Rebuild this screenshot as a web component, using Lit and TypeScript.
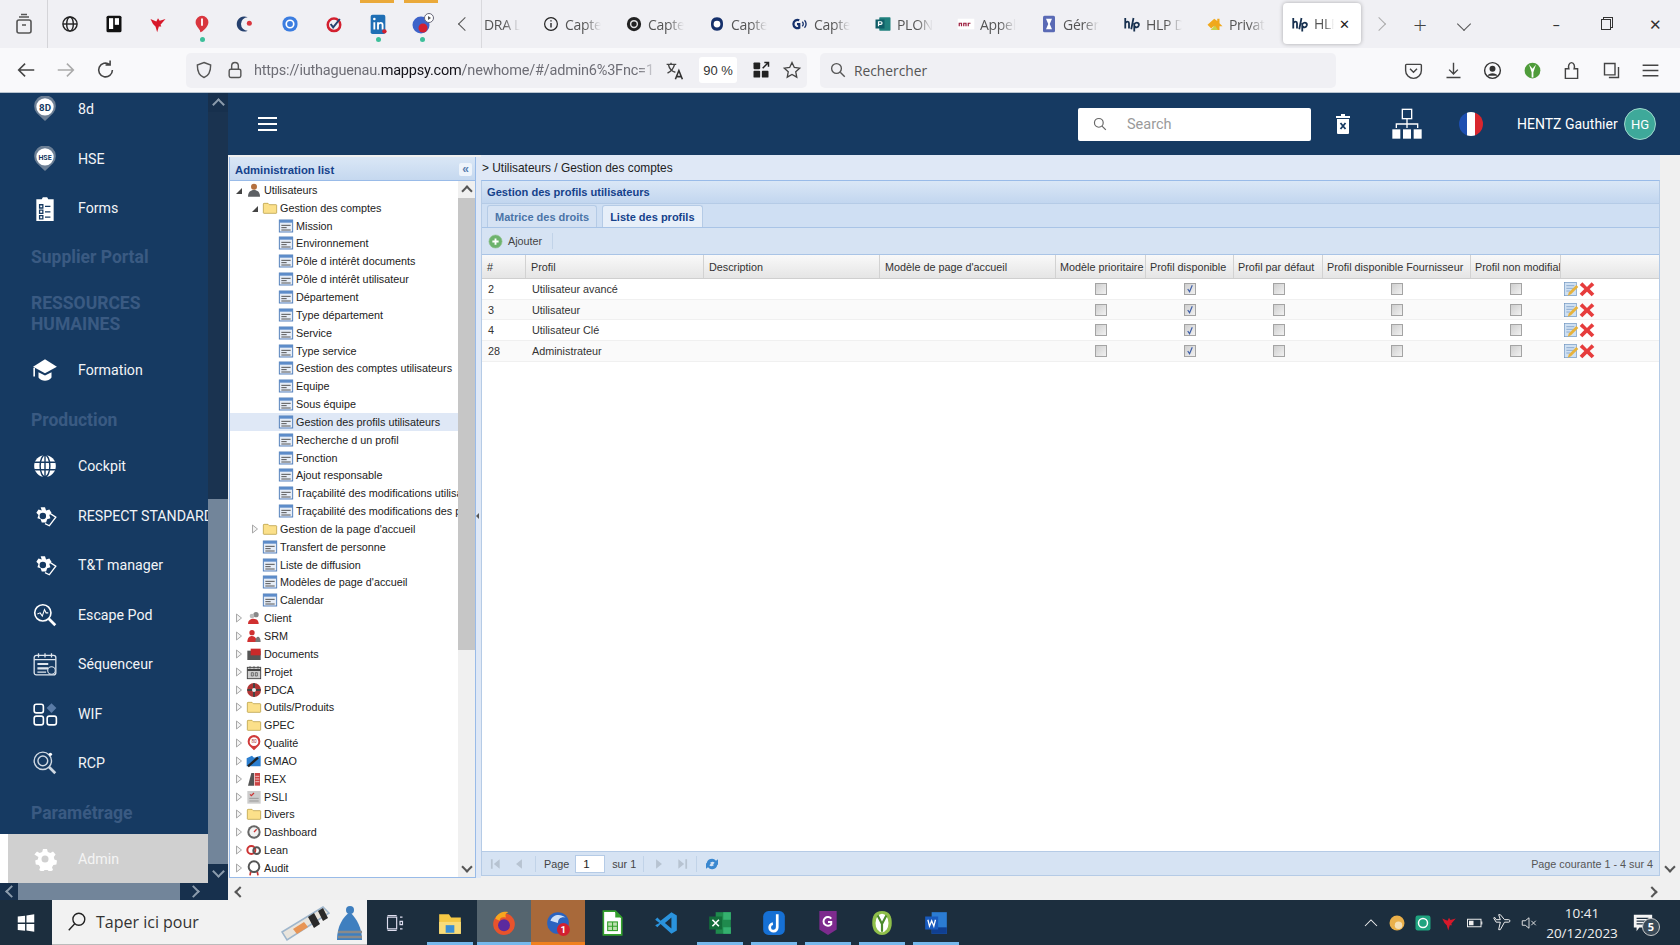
import { LitElement, css, html, svg } from "lit";
import { customElement } from "lit/decorators.js";

const ICONS: Record<string, any> = {
  view: svg`<rect x="5" y="8" width="14" height="13" rx="2" fill="none" stroke="#555" stroke-width="1.6"/><path d="M7 5h10M9 2.5h6M10 13h4" stroke="#555" stroke-width="1.6"/>`,
  globe: svg`<g fill="none" stroke="#222" stroke-width="1.7"><circle cx="12" cy="12" r="8.5"/><ellipse cx="12" cy="12" rx="4" ry="8.5"/><path d="M3.5 12h17"/></g>`,
  trello: svg`<rect x="3" y="2" width="18" height="20" rx="2" fill="#111"/><rect x="6" y="5" width="5" height="13" fill="#fff"/><rect x="13" y="5" width="5" height="8" fill="#fff"/>`,
  bird: svg`<path d="M3 6l7 3 2-4 2 3 7-2-6 7 1 2-3 0-2 7-2-7-3-3z" fill="#d7182a"/>`,
  pin1: svg`<path d="M12 3a7 7 0 0 1 7 7c0 5-7 11-9 11 1-3-5-6-5-11a7 7 0 0 1 7-7z" fill="#d9363e"/><path d="M12 6v8" stroke="#fff" stroke-width="2"/>`,
  moon: svg`<path d="M14 4a9 9 0 1 0 0 16 7 7 0 0 1 0-16z" fill="#25406e"/><circle cx="16" cy="11" r="3" fill="#d9363e"/>`,
  aqua: svg`<rect x="3" y="3" width="18" height="18" rx="8" fill="#3b7de0"/><circle cx="12" cy="12" r="4.5" fill="none" stroke="#fff" stroke-width="2"/>`,
  target: svg`<circle cx="12" cy="13" r="7.5" fill="none" stroke="#d3202f" stroke-width="3"/><path d="M8 12l3 4 8-10" fill="none" stroke="#25406e" stroke-width="2.4"/>`,
  linkedin: svg`<rect x="4" y="2" width="16" height="21" rx="2" fill="#1f6fb5"/><path d="M8 10v8M12 18v-8M12 13c1-3 5-3 5 0v5" stroke="#fff" stroke-width="2" fill="none"/><circle cx="8" cy="6.5" r="1.4" fill="#fff"/><circle cx="19" cy="20" r="2.4" fill="#d3202f"/>`,
  chrome: svg`<circle cx="11" cy="13" r="8.5" fill="#3d63c9"/><circle cx="13" cy="16" r="4.5" fill="#d3202f"/><circle cx="19" cy="6" r="4.5" fill="#fff" stroke="#667" stroke-width="1"/><path d="M18 4l3 2-3 2z" fill="#555"/>`,
  info: svg`<circle cx="12" cy="12" r="8.5" fill="none" stroke="#222" stroke-width="1.6"/><path d="M12 10.5v6M12 7v1.6" stroke="#222" stroke-width="1.8"/>`,
  swirl: svg`<circle cx="12" cy="12" r="9.5" fill="#222"/><circle cx="12" cy="12" r="4.5" fill="none" stroke="#ddd" stroke-width="2"/>`,
  q: svg`<path d="M12 3c6 0 8 4 8 9s-2 9-8 9-8-4-8-9 2-9 8-9z" fill="#15306b"/><circle cx="12" cy="12" r="4.5" fill="#fff"/>`,
  go: svg`<path d="M11 7a5.5 5.5 0 1 0 0 10v-5H8" fill="none" stroke="#15306b" stroke-width="3"/><path d="M15 9a4 4 0 0 1 0 6M18 7a7 7 0 0 1 0 10" fill="none" stroke="#15306b" stroke-width="1.8"/>`,
  planner: svg`<rect x="7" y="3" width="15" height="18" rx="1" fill="#20807d"/><rect x="2" y="6" width="12" height="12" fill="#0f5d66"/><path d="M6 15V9h3a1.6 1.6 0 0 1 0 3.4H6" fill="none" stroke="#fff" stroke-width="1.6"/>`,
  anr: svg`<rect x="1" y="5" width="22" height="14" fill="#fff"/><path d="M3 15v-4h3v4M9 15v-4h3v4M15 15v-4h3" fill="none" stroke="#9b1c3d" stroke-width="1.6"/>`,
  hourglass: svg`<rect x="4" y="1" width="16" height="22" rx="2" fill="#5a6ab5"/><path d="M8 5h8l-3 7 3 7H8l3-7z" fill="#fff"/>`,
  hlp: svg`<path d="M3 4v14M3 11c2-3 5-3 5 0v7M11 19l3-15M15 11v11M15 12c3-3 7-2 6 2-1 3-4 3-6 1" fill="none" stroke="#17304f" stroke-width="2.4"/>`,
  house: svg`<path d="M2 13L11 5l4 3V5h3v6l4 4h-4v5h-6l-2-5-3 3z" fill="#f0a81c"/><path d="M6 20l6-6 4 6z" fill="#c9d24a"/>`,
  back: svg`<path d="M21 12H4M11 5l-7 7 7 7" fill="none" stroke="#444" stroke-width="1.7"/>`,
  fwd: svg`<path d="M3 12h17M13 5l7 7-7 7" fill="none" stroke="#aaa" stroke-width="1.7"/>`,
  reload: svg`<path d="M19 12a7.5 7.5 0 1 1-3-6M16.5 1.5V6.5H11.5" fill="none" stroke="#444" stroke-width="1.7"/>`,
  shield: svg`<path d="M12 3l8 3c0 8-2 13-8 15-6-2-8-7-8-15z" fill="none" stroke="#555" stroke-width="1.7"/>`,
  lock: svg`<rect x="5" y="11" width="14" height="10" rx="2" fill="none" stroke="#555" stroke-width="1.7"/><path d="M8 11V7a4 4 0 0 1 8 0v4" fill="none" stroke="#555" stroke-width="1.7"/>`,
  translate: svg`<path d="M3 5h11M8 3v2M5 5c1 5 4 8 8 9M12 5c-1 5-4 8-8 10" fill="none" stroke="#444" stroke-width="1.6"/><path d="M13 22l4-10 4 10M15 19h5" fill="none" stroke="#333" stroke-width="1.8"/>`,
  ext: svg`<rect x="3" y="3" width="8" height="8" rx="1" fill="#222"/><rect x="3" y="13" width="8" height="8" rx="1" fill="#222"/><rect x="13" y="13" width="8" height="8" rx="1" fill="#222"/><path d="M14 10l6-6M16 3h5v5" fill="none" stroke="#222" stroke-width="1.8"/>`,
  star: svg`<path d="M12 3l2.8 6 6.4.8-4.7 4.4 1.2 6.4L12 17.4 6.300 20.600l1.200-6.400L2.800 9.800 9.200 9z" fill="none" stroke="#444" stroke-width="1.6"/>`,
  search: svg`<circle cx="10" cy="10" r="6.500" fill="none" stroke="#555" stroke-width="1.800"/><path d="M15 15l6 6" stroke="#555" stroke-width="1.800"/>`,
  pocket: svg`<path d="M4 5h16a1 1 0 0 1 1 1v6a9 9 0 0 1-18 0V6a1 1 0 0 1 1-1z" fill="none" stroke="#444" stroke-width="1.6"/><path d="M8 10l4 4 4-4" fill="none" stroke="#444" stroke-width="1.6"/>`,
  download: svg`<path d="M12 3v13M7 11l5 5 5-5M4 20h16" fill="none" stroke="#444" stroke-width="1.6"/>`,
  account: svg`<circle cx="12" cy="12" r="9" fill="none" stroke="#333" stroke-width="1.6"/><circle cx="12" cy="10" r="3.400" fill="#333"/><path d="M6 18c2-4 10-4 12 0" fill="#333"/>`,
  yshield: svg`<circle cx="12" cy="12" r="9" fill="#4f9c3a"/><path d="M8 5l3 9v6h2v-6l3-9-4 5z" fill="#fff"/>`,
  puzzle: svg`<path d="M5 21V10h4c-1-3 0-7 3-7s4 4 3 7h4v11z" fill="none" stroke="#444" stroke-width="1.6"/>`,
  synced: svg`<path d="M4 4h12v13H4zM9 20h11V8" fill="none" stroke="#444" stroke-width="1.6"/>`,
  burger: svg`<path d="M3 6h18M3 12h18M3 18h18" stroke="#444" stroke-width="1.6"/>`,
  trash: svg`<path d="M6 7h12v14a1 1 0 0 1-1 1H7a1 1 0 0 1-1-1zM5 4h14v2H5zM10 2h4v2h-4z" fill="#fff"/><path d="M9.500 11l5 6M14.500 11l-5 6" stroke="#163a62" stroke-width="1.800"/>`,
  org: svg`<rect x="8.500" y="1" width="7" height="7" fill="none" stroke="#fff" stroke-width="1"/><path d="M12 8v4M4 15v-3h16v3M12 12v3" fill="none" stroke="#fff" stroke-width="1"/><rect x="1" y="16" width="6" height="7" fill="#fff"/><rect x="9" y="16" width="6" height="7" fill="#fff"/><rect x="17" y="16" width="6" height="7" fill="#fff"/>`,
  pin8: svg`<path d="M12 23L4.500 16A10 10 0 1 1 19.500 16z" fill="#6c7f95"/><circle cx="12" cy="10" r="8" fill="#fff"/><text x="12" y="13.500" font-size="9" font-weight="700" text-anchor="middle" fill="#163a62" font-family="Roboto">8D</text>`,
  pinh: svg`<path d="M12 23L4.500 16A10 10 0 1 1 19.500 16z" fill="#6c7f95"/><circle cx="12" cy="10" r="8" fill="#fff"/><text x="12" y="12.500" font-size="6.500" font-weight="700" text-anchor="middle" fill="#163a62" font-family="Roboto">HSE</text>`,
  forms: svg`<path d="M4 4h5l1-2h4l1 2h5v20H4z" fill="#fff"/><path d="M7 9h3v3H7zM7 14h3v3H7zM7 19h3v3H7zM12 10.500h5M12 15.500h5M12 20.500h5" fill="none" stroke="#163a62" stroke-width="1.200"/>`,
  grad: svg`<path d="M12 2L1 9l11 6 11-6z" fill="#fff"/><path d="M6 14v5c3 4 9 4 12 0v-5l-6 3z" fill="#fff"/><path d="M2 10v8" stroke="#fff" stroke-width="1.500"/>`,
  globew: svg`<circle cx="12" cy="12" r="10" fill="#fff"/><g fill="none" stroke="#163a62" stroke-width="1.300"><ellipse cx="12" cy="12" rx="4.500" ry="10"/><path d="M2 8.500h20M2 15.500h20M12 2v20"/></g>`,
  gearw: svg`<path d="M10 2h4l1 3 3-1 2 3-2 2 1 3-3 1-1 3h-4l-1-3-3-1 1-3-2-2 2-3 3 1z" fill="#fff" transform="translate(-2 2)"/><circle cx="10" cy="12" r="3" fill="#163a62"/><path d="M14 8l8 5-6 8-4-2" fill="none" stroke="#fff" stroke-width="1.200"/>`,
  lens: svg`<circle cx="10" cy="10" r="7.500" fill="none" stroke="#fff" stroke-width="1.500"/><path d="M15.500 15.500l6 6" stroke="#fff" stroke-width="2.500"/><path d="M5 11l2.500-1 2 3 2-6 1.500 3h2" fill="none" stroke="#fff" stroke-width="1"/>`,
  lens2: svg`<circle cx="10" cy="10" r="8" fill="none" stroke="#cfd8e2" stroke-width="1.300"/><circle cx="10" cy="10" r="4.500" fill="none" stroke="#cfd8e2" stroke-width="1.300"/><path d="M15.500 15.500l6 6" stroke="#cfd8e2" stroke-width="2.500"/><circle cx="17" cy="4" r="1.500" fill="#fff"/>`,
  cal: svg`<rect x="2" y="4" width="20" height="18" rx="2" fill="none" stroke="#dfe6ee" stroke-width="1.200"/><path d="M2 8h20M6 2v4M12 2v4M18 2v4" stroke="#dfe6ee" stroke-width="1.200"/><path d="M5 11h10v2H5zM5 15h10v2H5zM5 19h8v1H5z" fill="#dfe6ee"/><circle cx="18" cy="18" r="3.500" fill="#163a62" stroke="#dfe6ee"/>`,
  wif: svg`<g fill="none" stroke="#fff" stroke-width="1.500"><rect x="2" y="3" width="8.500" height="8" rx="2"/><rect x="2" y="14" width="8.500" height="8" rx="2"/><rect x="14" y="14" width="8.500" height="8" rx="2"/></g><path d="M18 2l4.500 4.500L18 11l-4.500-4.500z" fill="#5a7ba6"/>`,
  gear: svg`<path d="M10 2h4l.8 3 2.600 1 2.600-1.500 2.600 3-1.800 2.500.6 2.600 2.600 1-.6 3.900-3 .4-1.400 2.400 1 2.800-3.400 2-2-2.200h-3l-2 2.200-3.400-2 1-2.800-1.400-2.400-3-.4-.6-3.900 2.600-1 .6-2.600L1.400 7.500 4 4.500 6.600 6l2.600-1z" fill="#fff"/><circle cx="12" cy="12" r="3.500" fill="#d0d0d0"/>`,
  person: svg`<circle cx="12" cy="7" r="4.500" fill="#b5713f"/><path d="M3 22c0-7 4-10 9-10s9 3 9 10z" fill="#5c5f63"/>`,
  folder: svg`<path d="M2 6a1 1 0 0 1 1-1h6l2 2h10a1 1 0 0 1 1 1v11a1 1 0 0 1-1 1H3a1 1 0 0 1-1-1z" fill="#fbe08a" stroke="#b59a3c" stroke-width="1.100"/>`,
  form: svg`<rect x="2" y="3" width="20" height="18" fill="#e6edf7" stroke="#4d7bb8" stroke-width="1.400"/><rect x="2" y="3" width="20" height="4" fill="#5d8cc9"/><path d="M5 11h14M5 14.500h8M5 18h14" stroke="#555" stroke-width="1.500"/>`,
  client: svg`<circle cx="15" cy="7" r="4" fill="#888"/><path d="M3 21c0-6 4-8 8-8s8 2 8 8z" fill="#d03030"/><circle cx="9" cy="9" r="3.500" fill="#bbb"/>`,
  srm: svg`<circle cx="9" cy="7" r="4" fill="#d03030"/><path d="M2 21c0-6 3-9 7-9s7 3 7 9z" fill="#d03030"/><path d="M14 21c0-5 2-8 4-8s4 3 4 8z" fill="#777"/>`,
  docs: svg`<path d="M2 7h20v14H2z" fill="#555"/><path d="M7 4h15v10H7z" fill="#c92a2a"/>`,
  projet: svg`<rect x="2" y="5" width="20" height="17" fill="#ccc" stroke="#444" stroke-width="1.400"/><path d="M2 9h20" stroke="#444" stroke-width="3"/><path d="M6 3v4M12 3v4M18 3v4M8 13h3v5H8zM14 13h3v5h-3z" stroke="#444" fill="none"/>`,
  pdca: svg`<circle cx="12" cy="12" r="10.500" fill="#b03535"/><path d="M12 2v20M2 12h20" stroke="#444" stroke-width="3"/><circle cx="12" cy="12" r="3" fill="#eee"/>`,
  qual: svg`<path d="M12 23L5 16A9.500 9.500 0 1 1 19 16z" fill="#d03a3a"/><circle cx="12" cy="10" r="6.500" fill="#fff"/><text x="12" y="12.500" font-size="7" text-anchor="middle" fill="#b03535" font-family="Roboto">80</text>`,
  gmao: svg`<path d="M1 8l8-4 3 3 10-3v16H1z" fill="#2c7fd0"/><path d="M3 20L18 7" stroke="#222" stroke-width="3.500"/>`,
  rex: svg`<path d="M3 22L8 3h4v19z" fill="#555"/><path d="M13 3h8v19h-8z" fill="#c44"/><path d="M14 8h6M14 12h6M14 16h6" stroke="#fff"/>`,
  psli: svg`<rect x="2" y="3" width="20" height="19" fill="#ccc"/><path d="M6 8l2 2 4-4" fill="none" stroke="#c33" stroke-width="1.800"/><path d="M5 14h14M5 18h14" stroke="#999" stroke-width="1.500"/>`,
  dash: svg`<circle cx="12" cy="12" r="10" fill="#666"/><circle cx="12" cy="12" r="7" fill="#f2f2f2"/><path d="M12 12l4-4" stroke="#c33" stroke-width="2"/>`,
  lean: svg`<circle cx="8" cy="12" r="6" fill="none" stroke="#c33" stroke-width="3"/><circle cx="16" cy="13" r="5" fill="none" stroke="#555" stroke-width="3"/>`,
  audit: svg`<circle cx="12" cy="10" r="8" fill="none" stroke="#555" stroke-width="3"/><path d="M7 18l-1 5M17 18l1 5" stroke="#c33" stroke-width="2.500"/>`,
  edit: svg`<rect x="2" y="2" width="18" height="20" fill="#cfe0f2" stroke="#6d93bf"/><path d="M5 7h12M5 11h12M5 15h6" stroke="#6d93bf"/><path d="M7 22l2-5L20 6l3 3-11 11z" fill="#e7b23c"/>`,
  del: svg`<path d="M5 2l7 7 7-7 4 4-7 6 7 7-4 4-7-7-7 7-4-4 7-7-7-6z" fill="#e63c3c"/>`,
  add: svg`<circle cx="12" cy="12" r="10.500" fill="#6db36d" stroke="#97c497"/><path d="M12 7v10M7 12h10" stroke="#fff" stroke-width="3"/>`,
  first: svg`<path d="M5 4h3v16H5zM20 4v16L10 12z" fill="#b7c3d1"/>`,
  prev: svg`<path d="M17 4v16L7 12z" fill="#b7c3d1"/>`,
  next: svg`<path d="M7 4v16l10-8z" fill="#b7c3d1"/>`,
  last: svg`<path d="M16 4h3v16h-3zM4 4v16l10-8z" fill="#b7c3d1"/>`,
  refresh: svg`<path d="M4 11a8 8 0 0 1 14-4l3-2v8h-8l3-3a5 5 0 0 0-8 2zM20 13a8 8 0 0 1-14 4l-3 2v-8h8l-3 3a5 5 0 0 0 8-2z" fill="#3a88d0"/>`,
  win: svg`<path d="M3 5l8-1v7.500H3zM12.500 3.800L21 2.500v9h-8.500zM3 13h8v7.500l-8-1zM12.500 13H21v8.500l-8.500-1.300z" fill="#fff"/>`,
  mglass: svg`<circle cx="14" cy="9" r="6.500" fill="none" stroke="#222" stroke-width="1.500"/><path d="M9.500 14L3 21" stroke="#222" stroke-width="1.500"/>`,
  taskview: svg`<path d="M3 5h11v14H3zM18 5h3M18 10h3v4h-3zM18 19h3M3 3h11M3 21h11" fill="none" stroke="#dde" stroke-width="1.400"/>`,
  explorer: svg`<path d="M2 4h9l2 3h9v15H2z" fill="#f6c945"/><path d="M2 11h20v11H2z" fill="#f9dc7a"/><rect x="8" y="14" width="8" height="7" fill="#3a8fd6"/>`,
  firefox: svg`<circle cx="12" cy="13" r="10" fill="#e8532c"/><circle cx="12" cy="14" r="5.500" fill="#5b2a9e"/><path d="M4 8c2-6 9-7 12-6-3 1-3 3-2 5-4-1-6 0-6 3z" fill="#f7a61f"/>`,
  thunder: svg`<circle cx="12" cy="12" r="10" fill="#2a63c0"/><path d="M5 10c2-6 9-7 14-3-4-1-7 1-7 5z" fill="#cfe1f7"/><circle cx="17" cy="18" r="6" fill="#d3202f"/><text x="17" y="21" font-size="9" font-weight="700" text-anchor="middle" fill="#fff" font-family="Roboto">1</text>`,
  calc: svg`<path d="M4 1h11l6 6v16H4z" fill="#fff" stroke="#33a02c" stroke-width="1.500"/><path d="M15 1v6h6z" fill="#33a02c"/><rect x="8" y="11" width="9" height="8" fill="#bde0b0" stroke="#33a02c"/><path d="M8 15h9M12.500 11v8" stroke="#33a02c"/>`,
  vscode: svg`<path d="M17 2l5 3v14l-5 3L7 13l-3 3-2-2 4-2-4-3 2-2 3 3zM17 7l-6 5 6 5z" fill="#2a93dd"/>`,
  excel: svg`<path d="M8 2h14v20H8z" fill="#1f8a4d"/><path d="M15 2h7v7h-7zM15 16h7v6h-7z" fill="#35b06f"/><rect x="2" y="6" width="12" height="12" fill="#136c3a"/><path d="M5 9l6 6M11 9l-6 6" stroke="#fff" stroke-width="1.500"/>`,
  japp: svg`<rect x="2" y="1" width="20" height="22" rx="5" fill="#1670d4"/><path d="M15 4v12a3.500 3.500 0 1 1-4-3.400" fill="none" stroke="#fff" stroke-width="2.500"/>`,
  gpdf: svg`<path d="M4 1h16v17l-8 5-8-5z" fill="#7d2b8e"/><path d="M15 8a4 4 0 1 0 0 5v-2h-3" fill="none" stroke="#fff" stroke-width="1.800"/>`,
  yapp: svg`<path d="M12 1c7 0 9 5 9 11s-3 11-9 11-9-5-9-11S5 1 12 1z" fill="#8fbf4a"/><ellipse cx="12" cy="12" rx="6" ry="8.500" fill="#fff"/><path d="M8 5l4 8v7M16 5l-4 8" fill="none" stroke="#4c8a2d" stroke-width="2"/>`,
  word: svg`<path d="M8 2h14v20H8z" fill="#2b7cd3"/><path d="M8 16h14v6H8z" fill="#103f91"/><rect x="2" y="6" width="12" height="12" fill="#185abd"/><path d="M4.500 9l1.500 6 2-5 2 5 1.500-6" fill="none" stroke="#fff" stroke-width="1.200"/>`,
  caretup: svg`<path d="M4 16l8-8 8 8" fill="none" stroke="#eee" stroke-width="1.400"/>`,
  sun: svg`<circle cx="12" cy="12" r="10" fill="#eab04a"/><circle cx="14" cy="15" r="5" fill="#f4dfb5"/>`,
  sync: svg`<rect x="2" y="2" width="20" height="20" rx="3" fill="#1fa37f"/><circle cx="12" cy="12" r="6" fill="none" stroke="#fff" stroke-width="2"/>`,
  battery: svg`<rect x="2" y="7" width="18" height="10" fill="none" stroke="#eee" stroke-width="1.300"/><rect x="4" y="9" width="6" height="6" fill="#eee"/><path d="M21 10v4" stroke="#eee" stroke-width="1.500"/>`,
  plane: svg`<path d="M2 6l3 5h5l-2 9h2l5-9h5a1 1 0 0 0 0-3h-5L10 2H8l2 6H5L3 5z" fill="none" stroke="#eee" stroke-width="1.200"/>`,
  mute: svg`<path d="M3 9h4l5-4v14l-5-4H3zM15 9l6 6M21 9l-6 6" fill="none" stroke="#eee" stroke-width="1.200"/>`,
  notif: svg`<path d="M2 3h20v14H8l-3 4v-4H2z" fill="#f5f5f5"/><path d="M5 7h13M5 10h13M5 13h8" stroke="#1c2e3e" stroke-width="1.200"/>`,
};

const icon = (name: string, size = 24) =>
  html`<svg class="i" width=${size} height=${size} viewBox="0 0 24 24">${ICONS[name]}</svg>`;

const PINNED = [
  { i: "globe", s: 20 },
  { i: "trello", s: 20 },
  { i: "bird", s: 20 },
  { i: "pin1", s: 22, dot: true },
  { i: "moon", s: 20 },
  { i: "aqua", s: 20 },
  { i: "target", s: 20 },
  { i: "linkedin", s: 22, dot: true, bar: true },
  { i: "chrome", s: 24, dot: true, bar: true },
];

const TABS = [
  ["info", "Capte"],
  ["swirl", "Capte"],
  ["q", "Capte"],
  ["go", "Capte"],
  ["planner", "PLON"],
  ["anr", "Appel"],
  ["hourglass", "Gérer"],
  ["hlp", "HLP D"],
  ["house", "Privat"],
];

type Row = { label?: string; icon?: string; heading?: string; cls?: string };
const MENU: Row[] = [
  { label: "8d", icon: "pin8" },
  { label: "HSE", icon: "pinh" },
  { label: "Forms", icon: "forms" },
  { heading: "Supplier Portal" },
  { heading: "RESSOURCES HUMAINES", cls: "tall" },
  { label: "Formation", icon: "grad" },
  { heading: "Production", cls: "short" },
  { label: "Cockpit", icon: "globew" },
  { label: "RESPECT STANDARD", icon: "gearw" },
  { label: "T&T manager", icon: "gearw" },
  { label: "Escape Pod", icon: "lens" },
  { label: "Séquenceur", icon: "cal" },
  { label: "WIF", icon: "wif" },
  { label: "RCP", icon: "lens2" },
  { heading: "Paramétrage", cls: "short" },
];

// depth, expander (o open, c closed, "" leaf), icon, label
const TREE: [number, string, string, string][] = [
  [0, "o", "person", "Utilisateurs"],
  [1, "o", "folder", "Gestion des comptes"],
  [2, "", "form", "Mission"],
  [2, "", "form", "Environnement"],
  [2, "", "form", "Pôle d intérêt documents"],
  [2, "", "form", "Pôle d intérêt utilisateur"],
  [2, "", "form", "Département"],
  [2, "", "form", "Type département"],
  [2, "", "form", "Service"],
  [2, "", "form", "Type service"],
  [2, "", "form", "Gestion des comptes utilisateurs"],
  [2, "", "form", "Equipe"],
  [2, "", "form", "Sous équipe"],
  [2, "", "form", "Gestion des profils utilisateurs"],
  [2, "", "form", "Recherche d un profil"],
  [2, "", "form", "Fonction"],
  [2, "", "form", "Ajout responsable"],
  [2, "", "form", "Traçabilité des modifications utilisateurs"],
  [2, "", "form", "Traçabilité des modifications des profils"],
  [1, "c", "folder", "Gestion de la page d'accueil"],
  [1, "", "form", "Transfert de personne"],
  [1, "", "form", "Liste de diffusion"],
  [1, "", "form", "Modèles de page d'accueil"],
  [1, "", "form", "Calendar"],
  [0, "c", "client", "Client"],
  [0, "c", "srm", "SRM"],
  [0, "c", "docs", "Documents"],
  [0, "c", "projet", "Projet"],
  [0, "c", "pdca", "PDCA"],
  [0, "c", "folder", "Outils/Produits"],
  [0, "c", "folder", "GPEC"],
  [0, "c", "qual", "Qualité"],
  [0, "c", "gmao", "GMAO"],
  [0, "c", "rex", "REX"],
  [0, "c", "psli", "PSLI"],
  [0, "c", "folder", "Divers"],
  [0, "c", "dash", "Dashboard"],
  [0, "c", "lean", "Lean"],
  [0, "c", "audit", "Audit"],
];

const COLS = [
  "#",
  "Profil",
  "Description",
  "Modèle de page d'accueil",
  "Modèle prioritaire",
  "Profil disponible",
  "Profil par défaut",
  "Profil disponible Fournisseur",
  "Profil non modifiable",
  "",
];

const PROFILES = [
  ["2", "Utilisateur avancé"],
  ["3", "Utilisateur"],
  ["4", "Utilisateur Clé"],
  ["28", "Administrateur"],
];

const APPS = [
  { i: "explorer", on: "b" },
  { i: "firefox", on: "b", cls: "ff" },
  { i: "thunder", on: "o", cls: "tb" },
  { i: "calc" },
  { i: "vscode" },
  { i: "excel", on: "b" },
  { i: "japp", on: "b" },
  { i: "gpdf", on: "b" },
  { i: "yapp", on: "b" },
  { i: "word", on: "b" },
];

@customElement("app-root")
export class AppRoot extends LitElement {
  private renderTabs() {
    return html`<div class="tabbar">
      <div class="viewcell">${icon("view", 24)}</div>
      ${PINNED.map(
        (p) => html`<div class="pin ${p.bar ? "bar" : ""} ${p.dot ? "dot" : ""}">${icon(p.i, p.s)}</div>`
      )}
      <div class="tabchev"><span class="chev left"></span></div>
      <div class="tab first"><span class="tlabel">DRA L</span></div>
      ${TABS.map(
        ([i, t]) => html`<div class="tab">${icon(i, 18)}<span class="tlabel">${t}</span></div>`
      )}
      <div class="tab active">${icon("hlp", 18)}<span class="tlabel">HLP</span><span class="tx">✕</span></div>
      <div class="tabchev r"><span class="chev right"></span></div>
      <div class="plain plus">+</div>
      <div class="plain more"><span class="chev down"></span></div>
      <div class="winbtns">
        <div class="wb">–</div>
        <div class="wb"><span class="restore"></span></div>
        <div class="wb close">✕</div>
      </div>
    </div>`;
  }

  private renderNav() {
    return html`<div class="nav">
      <div class="navbtn">${icon("back", 22)}</div>
      <div class="navbtn">${icon("fwd", 22)}</div>
      <div class="navbtn">${icon("reload", 22)}</div>
      <div class="urlbar">
        ${icon("shield", 20)}${icon("lock", 20)}
        <div class="url">https://iuthaguenau.<b>mappsy.com</b>/newhome/#/admin6%3Fnc=1</div>
        ${icon("translate", 21)}
        <div class="zoompct">90 %</div>
        ${icon("ext", 20)}${icon("star", 20)}
      </div>
      <div class="searchbar">${icon("search", 18)}<span>Rechercher</span></div>
      <div class="tools">
        ${["pocket", "download", "account", "yshield", "puzzle", "synced", "burger"].map(
          (n) => html`<div class="tool">${icon(n, 21)}</div>`
        )}
      </div>
    </div>`;
  }

  private renderSidebar() {
    return html`<div class="side">
      <div class="side-top">
        <div class="menu">
          <div class="menu-list">
            ${MENU.map((m) =>
              m.heading
                ? html`<div class="mhead ${m.cls ?? ""}"><span>${m.heading}</span></div>`
                : html`<div class="mrow"><span class="micon">${icon(m.icon!, 26)}</span><span class="mtext">${m.label}</span></div>`
            )}
          </div>
          <div class="admin"><div class="admin-in"><span class="micon">${icon("gear", 24)}</span><span class="mtext">Admin</span></div></div>
        </div>
        <div class="vs">
          <div class="vsbtn up"><span class="chev2 u"></span></div>
          <div class="vstrack"></div>
          <div class="vsthumb"></div>
          <div class="vsbtn"><span class="chev2 d"></span></div>
        </div>
      </div>
      <div class="hs">
        <div class="hsbtn"><span class="chev2 l"></span></div>
        <div class="hsthumb"></div>
        <div class="hsbtn w"><span class="chev2 r"></span></div>
      </div>
    </div>`;
  }

  private renderTree() {
    return html`<div class="tree">
      <div class="tree-title"><span>Administration list</span><span class="collapse">«</span></div>
      <div class="tree-body">
        <div class="tree-rows">
          ${TREE.map(
            ([d, e, i, l]) => html`<div class="node ${l === "Gestion des profils utilisateurs" ? "sel" : ""} d${d}">
              <span class="exp ${e}">${e === "c"
                ? html`<svg width="8" height="10" viewBox="0 0 8 10"><path d="M1.500 1l5 4-5 4z" fill="#f4f4f4" stroke="#a8a8a8"/></svg>`
                : ""}</span>${icon(i, 16)}<span class="nlabel">${l}</span>
            </div>`
          )}
        </div>
        <div class="tree-sb">
          <div class="tsb-btn"><span class="chev3 u"></span></div>
          <div class="tsb-thumb"></div>
          <div class="tsb-rest"></div>
          <div class="tsb-btn"><span class="chev3 d"></span></div>
        </div>
      </div>
    </div>`;
  }

  private renderGrid() {
    return html`<div class="grid">
      <div class="grow ghead">${COLS.map((c) => html`<div class="gh"><span>${c}</span></div>`)}</div>
      ${PROFILES.map(
        ([id, name], i) => html`<div class="grow gbody ${i % 2 ? "alt" : ""}">
          <div class="gc">${id}</div>
          <div class="gc">${name}</div>
          <div class="gc"></div>
          <div class="gc"></div>
          ${[false, true, false, false, false].map(
            (on) => html`<div class="gc mid"><span class="cb">${on
              ? html`<svg width="11" height="11" viewBox="0 0 11 11"><path d="M3 6l2 3 3-7" fill="none" stroke="#4060a8" stroke-width="1.300"/></svg>`
              : ""}</span></div>`
          )}
          <div class="gc acts">${icon("edit", 16)}${icon("del", 16)}</div>
        </div>`
      )}
      <div class="gfill"></div>
    </div>`;
  }

  private renderContent() {
    return html`<div class="content">
      <div class="crumb">&gt; Utilisateurs / Gestion des comptes</div>
      <div class="panel">
        <div class="ptitle">Gestion des profils utilisateurs</div>
        <div class="ptabs">
          <div class="ptab">Matrice des droits</div>
          <div class="ptab on">Liste des profils</div>
        </div>
        <div class="ptool">
          <span class="addbtn">${icon("add", 15)}<span>Ajouter</span></span>
          <span class="sep"></span>
        </div>
        ${this.renderGrid()}
        <div class="pager">
          ${icon("first", 14)}<span class="pg2">${icon("prev", 14)}</span><span class="sep s1"></span>
          <span class="ptxt">Page</span><span class="pinput">1</span><span class="ptxt">sur 1</span>
          <span class="sep s2"></span>${icon("next", 14)}<span class="pg2">${icon("last", 14)}</span>
          <span class="sep s3"></span>${icon("refresh", 16)}
          <span class="pcount">Page courante 1 - 4 sur 4</span>
        </div>
      </div>
    </div>`;
  }

  private renderTaskbar() {
    return html`<div class="taskbar">
      <div class="start">${icon("win", 22)}</div>
      <div class="tsearch">
        ${icon("mglass", 22)}<span>Taper ici pour</span>
        <svg class="snow" width="84" height="40" viewBox="0 0 84 40">
          <path d="M1 30L42 5l6 6L6 38z" fill="#e9e4dc" stroke="#9fb6cc" stroke-width="1.500"/>
          <path d="M12 27l11-7 4 5-11 7z" fill="#e89454"/>
          <path d="M27 15l6-4 6 11-6 4zM37 9l5-3 5 10-5 3z" fill="#2a2a2a"/>
          <path d="M56 38c0-14 6-23 13-28 7 7 12 16 12 28z" fill="#3f7fbf"/>
          <path d="M57 30h24M57 35h24" stroke="#8a8a8a" stroke-width="2.500"/>
          <circle cx="69" cy="8" r="4" fill="#3f7fbf"/>
        </svg>
      </div>
      <div class="taskview">${icon("taskview", 20)}</div>
      ${APPS.map(
        (a) => html`<div class="app ${a.cls ?? ""} ${a.on ?? ""}">${icon(a.i, 26)}</div>`
      )}
      <div class="tray">
        ${icon("caretup", 18)}${icon("sun", 18)}${icon("sync", 18)}${icon("bird", 18)}${icon("battery", 18)}${icon("plane", 20)}${icon("mute", 18)}
        <div class="clock"><div>10:41</div><div>20/12/2023</div></div>
        <div class="notif">${icon("notif", 22)}<span class="nbadge">5</span></div>
      </div>
    </div>`;
  }

  render() {
    return html`${this.renderTabs()}${this.renderNav()}
      <div class="main">
        ${this.renderSidebar()}
        <div class="work">
          <div class="apphead">
            <div class="burger"><span></span><span></span><span></span></div>
            <div class="hsearch">
              <svg width="14" height="14" viewBox="0 0 24 24"><circle cx="10" cy="10" r="7.500" fill="none" stroke="#666" stroke-width="2"/><path d="M15.500 15.500L22 22" stroke="#666" stroke-width="2"/></svg>
              <span>Search</span>
            </div>
            <div class="hi trash">${icon("trash", 24)}</div>
            <div class="hi org">${icon("org", 32)}</div>
            <div class="flag"><span></span><span></span><span></span></div>
            <div class="uname">HENTZ Gauthier</div>
            <div class="avatar">HG</div>
          </div>
          <div class="body">
            ${this.renderTree()}
            <div class="split"><span></span></div>
            ${this.renderContent()}
            <div class="rsb"><span class="chev3 d"></span></div>
          </div>
          <div class="bottomsb"><span class="chev3 l"></span><span class="chev3 r"></span></div>
        </div>
      </div>
      ${this.renderTaskbar()}`;
  }

  static styles = css`
    :host {
      display: flex;
      flex-direction: column;
      width: 1680px;
      height: 945px;
      overflow: hidden;
      font-family: "Liberation Sans", sans-serif;
      background: #f0f0f0;
    }
    .i { display: block; flex: none; }

    /* browser tabs */
    .tabbar { height: 48px; flex: none; display: flex; align-items: center; background: #f0f0f4; font-family: "Open Sans", sans-serif; }
    .viewcell { width: 47px; height: 48px; display: flex; align-items: center; justify-content: center; border-right: 1px solid #d4d4d8; }
    .pin { width: 44px; height: 48px; display: flex; align-items: center; justify-content: center; position: relative; }
    .pin.dot::after { content: ""; position: absolute; left: 20px; top: 37px; width: 5px; height: 5px; border-radius: 50%; background: #3cbf9a; }
    .pin.bar::before { content: ""; position: absolute; left: 4px; right: 6px; top: 0; height: 3px; background: #eaa93a; }
    .tabchev { width: 38px; height: 48px; box-sizing: border-box; padding-left: 4px; display: flex; align-items: center; justify-content: center; border-right: 1px solid #d9d9dd; margin-right: -4px; }
    .tabchev.r { width: 36px; padding: 0; margin: 0 2px 0 0; border: none; }
    .chev { width: 9px; height: 9px; display: block; border-left: 1.500px solid #555; border-bottom: 1.500px solid #555; }
    .chev.left { transform: rotate(45deg); }
    .chev.right { transform: rotate(225deg); border-color: #aaa; }
    .chev.down { transform: rotate(-45deg); }
    .tab { width: 83px; height: 48px; box-sizing: border-box; padding-left: 16px; display: flex; align-items: center; gap: 5px; font-size: 14px; color: #555; overflow: hidden; }
    .tab.first { width: 48px; padding-left: 6px; }
    .tlabel { display: block; width: 36px; flex: none; white-space: nowrap; overflow: hidden; letter-spacing: -0.3px; -webkit-mask-image: linear-gradient(90deg, #000 55%, transparent); mask-image: linear-gradient(90deg, #000 55%, transparent); }
    .tab.active { width: 78px; height: 41px; margin: 0 0 1px 10px; padding-left: 8px; background: #fff; border-radius: 4px; box-shadow: 0 0 4px rgba(0, 0, 0, 0.3); position: relative; }
    .tab.active .tlabel { width: 20px; }
    .tx { font-size: 13px; color: #222; }
    .plain { height: 48px; display: flex; align-items: center; justify-content: center; }
    .plus { width: 42px; font-size: 24px; font-weight: 300; color: #444; }
    .more { width: 46px; }
    .winbtns { margin-left: auto; display: flex; }
    .wb { width: 49.500px; height: 48px; display: flex; align-items: center; justify-content: center; font-size: 14px; color: #333; }
    .wb.close { font-size: 15px; }
    .restore { display: block; width: 8px; height: 9px; border: 1px solid #333; box-shadow: 2px -2px 0 -1px #f0f0f4, 2px -2px 0 0 #333; }

    /* url bar */
    .nav { height: 44px; flex: none; display: flex; align-items: center; background: #f9f9fb; border-bottom: 1px solid #b8c4d0; padding-left: 6px; }
    .navbtn { width: 40px; display: flex; justify-content: center; }
    .urlbar { width: 621px; height: 35px; box-sizing: border-box; margin-left: 60px; border-radius: 5px; background: #f0f0f4; display: flex; align-items: center; padding-left: 8px; }
    .urlbar > svg:nth-child(2) { margin-left: 11px; }
    .url { width: 404px; margin-left: 9px; font-size: 14.500px; letter-spacing: -0.2px; color: #6e6e76; white-space: nowrap; overflow: hidden; font-family: Roboto, sans-serif; -webkit-mask-image: linear-gradient(90deg, #000 95%, transparent); mask-image: linear-gradient(90deg, #000 95%, transparent); }
    .url b { font-weight: 400; color: #15141a; }
    .urlbar > svg:nth-child(4) { margin-left: 6px; }
    .zoompct { width: 38px; height: 26px; margin-left: 14px; background: #fff; border-radius: 3px; font-size: 13px; color: #333; display: flex; align-items: center; justify-content: center; }
    .urlbar > svg:nth-child(6) { margin-left: 14px; }
    .urlbar > svg:nth-child(7) { margin-left: 11px; }
    .searchbar { width: 516px; height: 35px; margin-left: 13px; box-sizing: border-box; padding-left: 9px; background: #f0f0f4; border-radius: 5px; display: flex; align-items: center; gap: 7px; font-size: 13.800px; color: #555; font-family: "Open Sans", sans-serif; }
    .tools { display: flex; margin-left: 58px; }
    .tool { width: 39.500px; display: flex; justify-content: center; }

    .main { flex: 1; min-height: 0; display: flex; }

    /* left menu */
    .side { width: 228px; flex: none; display: flex; flex-direction: column; background: #163a62; }
    .side-top { height: 790px; display: flex; }
    .menu { width: 208px; flex: none; display: flex; flex-direction: column; overflow: hidden; font-family: Roboto, sans-serif; }
    .menu-list { height: 741px; overflow: hidden; flex: none; }
    .mrow { height: 49.500px; display: flex; align-items: center; padding-left: 32px; white-space: nowrap; color: #f2f4f7; font-size: 14.200px; }
    .mrow:first-child { margin-top: -8.750px; }
    .micon { width: 26px; flex: none; display: flex; justify-content: center; }
    .mtext { margin-left: 20px; }
    .mhead { height: 49.500px; box-sizing: border-box; display: flex; align-items: center; padding-left: 31px; font-size: 17.500px; line-height: 21px; font-weight: 700; color: #3a5a82; }
    .mhead.tall { height: 63px; width: 170px; }
    .mhead.short { height: 46.500px; padding-top: 4px; }
    .admin { height: 49px; background: #fff; padding-left: 8px; flex: none; }
    .admin-in { height: 49px; background: #d0d0d0; display: flex; align-items: center; padding-left: 24px; color: #f4f4f4; font-size: 14.200px; }
    .vs { width: 20px; flex: none; display: flex; flex-direction: column; background: #1a3350; }
    .vsbtn { height: 19px; flex: none; display: flex; align-items: center; justify-content: center; background: #17304d; }
    .vstrack { height: 387px; flex: none; background: #1a3350; }
    .vsthumb { flex: 1; background: #72859a; }
    .chev2 { display: block; width: 7px; height: 7px; border-left: 2px solid #8c9cad; border-top: 2px solid #8c9cad; }
    .chev2.u { transform: rotate(45deg); margin-top: 4px; }
    .chev2.d { transform: rotate(225deg); margin-bottom: 4px; }
    .chev2.l { transform: rotate(-45deg); margin-left: 4px; }
    .chev2.r { transform: rotate(135deg); margin-right: 4px; }
    .hs { height: 17px; display: flex; background: #17304d; }
    .hsbtn { width: 18px; flex: none; display: flex; align-items: center; justify-content: center; }
    .hsbtn.w { width: 30px; }
    .hsthumb { width: 162px; background: #72859a; }

    /* app header */
    .work { flex: 1; min-width: 0; display: flex; flex-direction: column; }
    .apphead { height: 62px; flex: none; background: #163a62; display: flex; align-items: center; font-family: Roboto, sans-serif; color: #fff; }
    .burger { width: 19px; margin-left: 30px; display: flex; flex-direction: column; gap: 4px; }
    .burger span { display: block; height: 2px; background: #fff; }
    .hsearch { width: 233px; height: 33px; margin-left: 801px; background: #fff; border-radius: 2px; box-sizing: border-box; padding-left: 15px; display: flex; align-items: center; gap: 20px; font-size: 14.500px; color: #9a9a9a; }
    .hi { display: flex; justify-content: center; }
    .trash { width: 24px; margin-left: 20px; }
    .org { width: 32px; margin-left: 36px; }
    .flag { width: 24px; height: 24px; margin-left: 36px; display: flex; border-radius: 50%; overflow: hidden; }
    .flag span { flex: 1; background: #fff; }
    .flag span:first-child { background: #1d4fb0; }
    .flag span:last-child { background: #d8262e; }
    .uname { margin-left: 34px; font-size: 14px; white-space: nowrap; width: 107px; }
    .avatar { width: 32px; height: 32px; border-radius: 50%; background: #3ea99a; border: 1px solid #9fd8cc; box-sizing: border-box; display: flex; align-items: center; justify-content: center; font-size: 13px; }

    .body { height: 728px; flex: none; display: flex; align-items: flex-start; background: #f0f0f0; }

    /* tree */
    .tree { width: 247px; height: 721px; margin: 2px 0 0 1px; flex: none; box-sizing: border-box; border: 1px solid #99bbe8; border-top: none; display: flex; flex-direction: column; background: #fff; font-size: 10.800px; color: #222; }
    .tree-title { height: 24px; flex: none; box-sizing: border-box; padding: 2px 3px 0 5px; display: flex; align-items: center; justify-content: space-between; font-weight: 700; font-size: 11.300px; color: #15428b; background: linear-gradient(#dae7f6, #c5d8ef); border-bottom: 1px solid #99bbe8; }
    .collapse { width: 13px; height: 13px; background: #eef4fb; border-radius: 2px; display: flex; align-items: center; justify-content: center; font-size: 12px; line-height: 11px; color: #5a7fb0; }
    .tree-body { flex: 1; min-height: 0; display: flex; }
    .tree-rows { width: 228px; flex: none; overflow: hidden; white-space: nowrap; }
    .node { height: 17.850px; display: flex; align-items: center; box-sizing: border-box; }
    .node.sel { background: #dfe8f6; }
    .node.d0 { padding-left: 1px; }
    .node.d1 { padding-left: 17px; }
    .node.d2 { padding-left: 33px; }
    .exp { width: 15px; flex: none; display: flex; justify-content: center; }
    .exp.o::before { content: ""; border: 3px solid transparent; border-right-color: #444; border-bottom-color: #444; margin-top: 2px; }
    .nlabel { margin-left: 2px; }
    .tree-sb { width: 17px; flex: none; display: flex; flex-direction: column; background: #f0f0f0; }
    .tsb-btn { height: 17px; flex: none; display: flex; align-items: center; justify-content: center; background: #f0f0f0; }
    .tsb-thumb { height: 452px; flex: none; background: #c6c6c6; }
    .tsb-rest { flex: 1; }
    .chev3 { display: block; width: 6px; height: 6px; border-left: 2px solid #555; border-top: 2px solid #555; }
    .chev3.u { transform: rotate(45deg); margin-top: 3px; }
    .chev3.d { transform: rotate(225deg); margin-bottom: 3px; }
    .chev3.l { transform: rotate(-45deg); }
    .chev3.r { transform: rotate(135deg); }
    .split { width: 5px; height: 721px; flex: none; margin-top: 2px; background: #dfe8f6; display: flex; align-items: center; }
    .split span { display: block; border: 3px solid transparent; border-right-color: #555; border-left: none; margin-top: -4px; }

    /* content */
    .content { width: 1179px; height: 721px; flex: none; background: #dfe8f6; display: flex; flex-direction: column; font-size: 10.800px; color: #333; }
    .crumb { height: 25px; flex: none; display: flex; align-items: center; padding-left: 1px; font-size: 11.900px; color: #222; background: #dfe8f6; }
    .panel { flex: 1; min-height: 0; display: flex; flex-direction: column; border: 1px solid #b5cbe6; border-top: 1px solid #99bbe8; background: #cfdff3; }
    .ptitle { height: 23px; flex: none; box-sizing: border-box; padding-left: 5px; display: flex; align-items: center; font-weight: 700; color: #15428b; font-size: 11.100px; background: linear-gradient(#dae7f6, #c2d6ef); border-bottom: 1px solid #b5cbe6; }
    .ptabs { height: 24px; flex: none; box-sizing: border-box; padding: 1px 0 0 5px; display: flex; align-items: flex-end; gap: 5px; background: #cfdff3; border-bottom: 1px solid #a9c4e6; }
    .ptab { height: 22px; box-sizing: border-box; padding: 0 7px; display: flex; align-items: center; font-weight: 700; font-size: 11px; color: #4a74a8; background: #d5e2f3; border: 1px solid #b5cbe6; border-bottom: none; border-radius: 3px 3px 0 0; }
    .ptab.on { color: #15428b; background: #e7eff9; padding: 0 7px; }
    .ptool { height: 27px; flex: none; box-sizing: border-box; padding-left: 6px; display: flex; align-items: center; background: #d6e3f3; border-bottom: 1px solid #a9c4e6; }
    .addbtn { display: flex; align-items: center; gap: 5px; color: #444; }
    .sep { width: 1px; height: 16px; background: #c1d3e8; flex: none; }
    .ptool .sep { margin-left: 10px; }
    .grid { flex: 1; min-height: 0; display: flex; flex-direction: column; background: #fff; }
    .grow { display: grid; grid-template-columns: 44px 178px 176px 176px 90px 88px 89px 148px 90px 98px; flex: none; }
    .ghead { height: 23px; background: linear-gradient(#f9f9f9, #e5e5e5); border-bottom: 1px solid #cfcfcf; }
    .gh { box-sizing: border-box; padding-left: 5px; display: flex; align-items: center; border-right: 1px solid #d2d2d2; overflow: hidden; white-space: nowrap; color: #333; }
    .gh:nth-child(n + 5) { padding-left: 4px; }
    .gh:last-child { border-right: none; }
    .gbody { height: 20.700px; border-bottom: 1px solid #f0f0f0; box-sizing: border-box; }
    .gbody.alt { background: #fafafa; }
    .gc { box-sizing: border-box; padding-left: 6px; display: flex; align-items: center; color: #333; }
    .gc.mid { padding: 0; justify-content: center; }
    .cb { width: 12px; height: 12px; box-sizing: border-box; border: 1px solid #a4a4a4; background: linear-gradient(135deg, #cfcfcf, #f1f1f1); display: flex; align-items: center; justify-content: center; }
    .acts { padding-left: 2px; gap: 0; }
    .gfill { flex: 1; }
    .pager { height: 24px; flex: none; box-sizing: border-box; padding: 0 6px 0 6px; display: flex; align-items: center; background: #d6e3f3; border-top: 1px solid #b5cbe6; color: #444; }
    .pg2 { margin-left: 10px; }
    .pager .s1 { margin: 0 8px 0 9px; }
    .pinput { width: 30px; height: 18px; margin: 0 7px 0 6px; box-sizing: border-box; border: 1px solid #b5cbe6; background: #fff; padding-left: 7px; display: flex; align-items: center; color: #222; font-size: 11.500px; }
    .pager .s2 { margin: 0 8px 0 7px; }
    .pager .s3 { margin: 0 7px 0 6px; }
    .pcount { margin-left: auto; color: #555; }

    .rsb { width: 19px; flex: none; height: 728px; box-sizing: border-box; background: #f0f0f0; display: flex; align-items: flex-end; justify-content: center; padding-bottom: 9px; }
    .bottomsb { height: 17px; flex: none; display: flex; align-items: center; justify-content: space-between; padding: 0 24px 0 8px; background: #f0f0f0; }

    /* windows taskbar */
    .taskbar { height: 45px; flex: none; display: flex; align-items: stretch; background: #1c2e3e; font-family: "Open Sans", sans-serif; color: #f0f0f0; }
    .start { width: 52px; flex: none; display: flex; align-items: center; justify-content: center; }
    .tsearch { width: 315px; flex: none; box-sizing: border-box; padding-left: 14px; background: #f2f2f2; display: flex; align-items: center; gap: 8px; font-size: 16px; color: #333; position: relative; overflow: hidden; border-bottom: 1px solid #bbb; }
    .snow { position: absolute; right: 2px; bottom: 2px; }
    .taskview { width: 56px; flex: none; display: flex; align-items: center; justify-content: center; }
    .app { width: 54px; flex: none; box-sizing: border-box; display: flex; align-items: center; justify-content: center; position: relative; }
    .app.b::after, .app.o::after { content: ""; position: absolute; left: 4px; right: 4px; bottom: 0; height: 3px; background: #76b9ed; }
    .app.ff { background: #55656f; }
    .app.ff::after { left: 0; right: 0; }
    .app.tb { background: #a8693a; }
    .app.o::after { left: 0; right: 0; background: #f0801e; }
    .tray { margin-left: auto; display: flex; align-items: center; padding-right: 14px; }
    .tray > svg { margin-right: 8px; }
    .clock { width: 72px; text-align: center; font-size: 13.500px; line-height: 20px; white-space: nowrap; }
    .notif { width: 46px; margin-left: 2px; position: relative; display: flex; justify-content: center; }
    .nbadge { position: absolute; left: 22px; top: 6px; width: 18px; height: 18px; box-sizing: border-box; border-radius: 50%; background: #3a4a58; border: 1px solid #ccc; display: flex; align-items: center; justify-content: center; font-size: 11px; font-weight: 700; color: #fff; }
  `;
}
